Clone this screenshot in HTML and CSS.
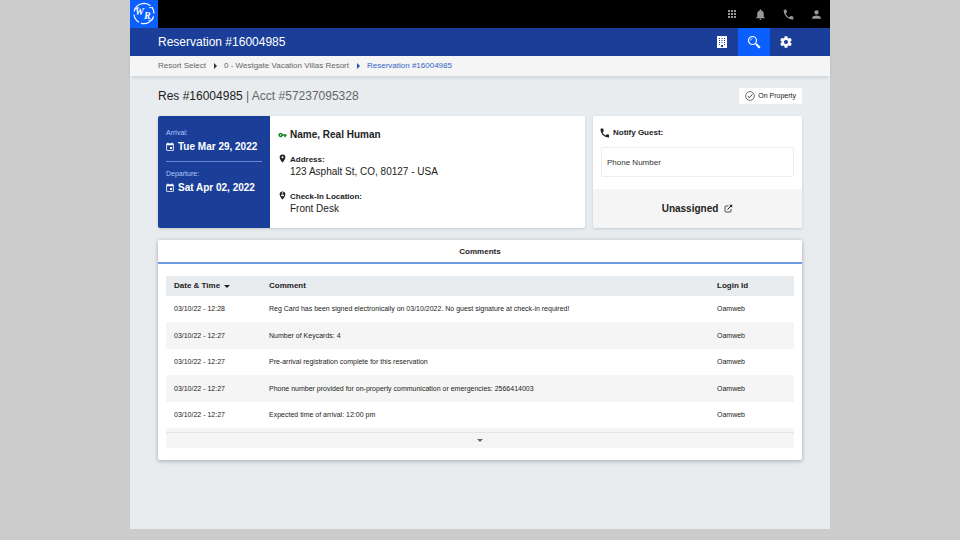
FILE: index.html
```
<!DOCTYPE html>
<html lang="en">
<head>
<meta charset="utf-8">
<meta name="viewport" content="width=device-width, initial-scale=1">
<title>Reservation #16004985</title>
<link rel="stylesheet" href="styles.css">
</head>
<body>
<div class="app">
  <header class="topbar">
    <a class="logo" href="#" aria-label="Home">
      <svg viewBox="0 0 28 28" width="28" height="28" fill="none" stroke="#fff">
        <path d="M20.500 5.800A10 10 0 0 0 4.200 11.500M4 14.500A10 10 0 0 0 9 22.200M11 23.200A10 10 0 0 0 23.600 16.500M24 13.500A10 10 0 0 0 21.800 7.200" stroke-width="1.200"/>
        <path d="M4.500 8.400 9 7.600M19 7.600h4M18.500 20.500l4.500-.8" stroke-width=".8"/>
        <text x="5" y="15">W</text>
        <text x="14" y="19">R</text>
      </svg>
    </a>
    <nav class="tools" aria-label="Account">
      <button type="button" aria-label="Apps"><svg viewBox="0 0 24 24" width="12" height="12"><path d="M4 4h4v4H4zM10 4h4v4h-4zM16 4h4v4h-4zM4 10h4v4H4zM10 10h4v4h-4zM16 10h4v4h-4zM4 16h4v4H4zM10 16h4v4h-4zM16 16h4v4h-4z"/></svg></button>
      <button type="button" aria-label="Notifications"><svg viewBox="0 0 24 24" width="13" height="13"><path d="M12 22c1.100 0 2-.9 2-2h-4c0 1.100.9 2 2 2zm6-6v-5c0-3.070-1.640-5.640-4.500-6.320V4a1.500 1.500 0 0 0-3 0v.68C7.630 5.360 6 7.920 6 11v5l-2 2v1h16v-1z"/></svg></button>
      <button type="button" aria-label="Calls"><svg viewBox="0 0 24 24" width="13" height="13"><path d="M6.620 10.790a15 15 0 0 0 6.590 6.590l2.200-2.200a1 1 0 0 1 1.020-.24c1.120.37 2.330.57 3.570.57.550 0 1 .45 1 1V20a1 1 0 0 1-1 1A17 17 0 0 1 3 4a1 1 0 0 1 1-1h3.500a1 1 0 0 1 1 1c0 1.250.2 2.450.57 3.570a1 1 0 0 1-.25 1.020z"/></svg></button>
      <button type="button" aria-label="Profile"><svg viewBox="0 0 24 24" width="13" height="13"><path d="M12 12a4 4 0 1 0 0-8 4 4 0 0 0 0 8zm0 2c-2.670 0-8 1.340-8 4v2h16v-2c0-2.660-5.330-4-8-4z"/></svg></button>
    </nav>
  </header>
  <div class="titlebar">
    <h1>Reservation #16004985</h1>
    <nav class="sections" aria-label="Sections">
      <button type="button" aria-label="Property"><svg viewBox="0 0 12 14" width="12" height="14"><path fill-rule="evenodd" d="M1 1h10v12H1zM3 3v1h1V3zm2.500 0v1h1V3zM8 3v1h1V3zM3 5v1h1V5zm2.500 0v1h1V5zM8 5v1h1V5zM3 7v1h1V7zm2.500 0v1h1V7zM8 7v1h1V7zM3 9v1h1V9zm5 0v1h1V9zM5 10v2h2v-2z"/></svg></button>
      <button type="button" class="active" aria-label="Search"><svg viewBox="0 0 14 14" width="14" height="14" fill="none" stroke="#fff"><circle cx="5.500" cy="5.500" r="4" stroke-width="1.200"/><path d="M3.500 5.500a2 2 0 0 1 2-2" stroke-width=".7"/><path d="M8.500 8.500l1.200 1.200" stroke-width="1.200"/><path d="M9.800 9.800l2.400 2.400" stroke-width="2.200" stroke-linecap="round"/></svg></button>
      <button type="button" aria-label="Settings"><svg viewBox="0 0 24 24" width="14" height="14"><path d="M19.430 12.980a7.800 7.800 0 0 0 0-1.960l2.110-1.650a.5.5 0 0 0 .12-.64l-2-3.460a.5.5 0 0 0-.61-.22l-2.490 1a7.300 7.300 0 0 0-1.690-.98l-.38-2.650A.49.490 0 0 0 14 2h-4a.49.490 0 0 0-.49.420l-.38 2.650c-.61.25-1.170.59-1.690.98l-2.490-1a.5.5 0 0 0-.61.220l-2 3.460a.5.5 0 0 0 .12.640l2.110 1.650a8 8 0 0 0 0 1.960l-2.110 1.650a.5.5 0 0 0-.12.640l2 3.460c.12.220.39.300.61.220l2.490-1c.52.400 1.080.73 1.690.98l.38 2.650c.03.240.24.420.49.420h4c.25 0 .46-.18.490-.42l.38-2.650c.61-.25 1.170-.59 1.690-.98l2.490 1c.23.090.49 0 .61-.22l2-3.460a.5.5 0 0 0-.12-.64zM12 15.500a3.500 3.500 0 1 1 0-7 3.500 3.500 0 0 1 0 7z"/></svg></button>
    </nav>
  </div>
  <nav class="crumbs" aria-label="Breadcrumb">
    <a href="#">Resort Select</a>
    <svg viewBox="0 0 4 6" width="4" height="6" fill="#333"><path d="M1 0l3 3-3 3z"/></svg>
    <a href="#">0 - Westgate Vacation Villas Resort</a>
    <svg viewBox="0 0 4 6" width="4" height="6" fill="#2450b8"><path d="M1 0l3 3-3 3z"/></svg>
    <a href="#" class="current" aria-current="page">Reservation #16004985</a>
  </nav>
  <main>
    <div class="heading">
      <h2>Res #16004985 <span>| Acct #57237095328</span></h2>
      <div class="status"><svg viewBox="0 0 10 10" width="10" height="10" fill="none" stroke="#333"><circle cx="5" cy="5" r="4.400" stroke-width=".7"/><path d="M2.700 5.200l1.600 1.500L7.400 3.300" stroke-width="1"/></svg>On Property</div>
    </div>
    <div class="summary">
      <section class="card stay">
        <div class="dates">
          <div class="date">
            <span class="date-label">Arrival:</span>
            <span class="date-value"><svg viewBox="0 0 24 24" width="10" height="10"><path d="M17 12h-5v5h5zM16 1v2H8V1H6v2H5a2 2 0 0 0-2 2v14c0 1.100.89 2 2 2h14a2 2 0 0 0 2-2V5a2 2 0 0 0-2-2h-1V1zm3 18H5V8h14z"/></svg>Tue Mar 29, 2022</span>
          </div>
          <div class="date">
            <span class="date-label">Departure:</span>
            <span class="date-value"><svg viewBox="0 0 24 24" width="10" height="10"><path d="M17 12h-5v5h5zM16 1v2H8V1H6v2H5a2 2 0 0 0-2 2v14c0 1.100.89 2 2 2h14a2 2 0 0 0 2-2V5a2 2 0 0 0-2-2h-1V1zm3 18H5V8h14z"/></svg>Sat Apr 02, 2022</span>
          </div>
        </div>
        <div class="guest">
          <div class="entry">
            <svg viewBox="0 0 24 24" width="9" height="12" fill="#14861b"><path d="M12.650 10A6 6 0 0 0 7 6a6 6 0 1 0 5.650 8H17v4h4v-4h2v-4zM7 14a2 2 0 1 1 0-4 2 2 0 0 1 0 4z"/></svg>
            <h3>Name, Real Human</h3>
          </div>
          <div class="entry">
            <svg viewBox="4 1 16 22" width="9" height="9"><path d="M12 2a7 7 0 0 0-7 7c0 5.250 7 13 7 13s7-7.750 7-13a7 7 0 0 0-7-7zm0 9.500a2.500 2.500 0 1 1 0-5 2.500 2.500 0 0 1 0 5z"/></svg>
            <div><h4>Address:</h4><p>123 Asphalt St, CO, 80127 - USA</p></div>
          </div>
          <div class="entry">
            <svg viewBox="4 1 16 22" width="9" height="9"><path fill-rule="evenodd" d="M12 2a7 7 0 0 0-7 7c0 5.250 7 13 7 13s7-7.750 7-13a7 7 0 0 0-7-7zm0 2a2 2 0 1 1 0 4 2 2 0 0 1 0-4zm0 10a5 5 0 0 1-4-2c0-1.500 2.700-2.300 4-2.300s4 .8 4 2.300a5 5 0 0 1-4 2z"/></svg>
            <div><h4>Check-In Location:</h4><p>Front Desk</p></div>
          </div>
        </div>
      </section>
      <section class="card notify">
        <div class="notify-form">
          <label for="phone"><svg viewBox="1 1 22 22" width="10" height="10"><path d="M6.620 10.790a15 15 0 0 0 6.590 6.590l2.200-2.200a1 1 0 0 1 1.020-.24c1.120.37 2.330.57 3.570.57.550 0 1 .45 1 1V20a2 2 0 0 1-2 2A18 18 0 0 1 2 4a2 2 0 0 1 2-2h3.500a1 1 0 0 1 1 1c0 1.250.2 3.450.57 4.570a1 1 0 0 1-.25 1.020z"/></svg>Notify Guest:</label>
          <input id="phone" type="tel" placeholder="Phone Number">
        </div>
        <button type="button" class="assign">Unassigned<svg viewBox="0 0 9 9" width="9" height="9" fill="none" stroke="#222"><path d="M4.500 2H1.800a.8.8 0 0 0-.8.8v4.400a.8.8 0 0 0 .8.800h4.400a.8.8 0 0 0 .8-.8V5" stroke-width=".8"/><path d="M3.500 5.500L7.500 1.500" stroke-width="1"/><path d="M5.200.8h3v3z" fill="#222" stroke="none"/></svg></button>
      </section>
    </div>
    <section class="card comments">
      <h3 class="tab">Comments</h3>
      <div class="comments-body">
        <div class="scroller">
          <table>
            <thead>
              <tr><th class="col-date"><button type="button" class="sort">Date &amp; Time<svg viewBox="0 0 6 3" width="6" height="3"><path d="M0 0h6L3 3z"/></svg></button></th><th>Comment</th><th class="col-login">Login Id</th></tr>
            </thead>
            <tbody>
              <tr><td>03/10/22 - 12:28</td><td>Reg Card has been signed electronically on 03/10/2022. No guest signature at check-in required!</td><td>Oamweb</td></tr>
              <tr><td>03/10/22 - 12:27</td><td>Number of Keycards: 4</td><td>Oamweb</td></tr>
              <tr><td>03/10/22 - 12:27</td><td>Pre-arrival registration complete for this reservation</td><td>Oamweb</td></tr>
              <tr><td>03/10/22 - 12:27</td><td>Phone number provided for on-property communication or emergencies: 2566414003</td><td>Oamweb</td></tr>
              <tr><td>03/10/22 - 12:27</td><td>Expected time of arrival: 12:00 pm</td><td>Oamweb</td></tr>
            </tbody>
          </table>
        </div>
        <button type="button" class="more" aria-label="Show more comments"><svg viewBox="0 0 6 3" width="6" height="3"><path d="M0 0h6L3 3z"/></svg></button>
      </div>
    </section>
  </main>
</div>
</body>
</html>
```
FILE: styles.css
```
* {
  box-sizing: border-box;
}

body {
  margin: 0;
  background: #ccc;
  color: #222;
  fill: #222;
  font-family: "Liberation Sans", Arial, sans-serif;
  font-size: 8px;
  line-height: 12px;
}

h1, h2, h3, h4, p {
  margin: 0;
}

button {
  display: flex;
  align-items: center;
  justify-content: center;
  border: 0;
  padding: 0;
  background: none;
  color: inherit;
  font: inherit;
  cursor: pointer;
}

a {
  color: inherit;
  text-decoration: none;
}

svg {
  display: block;
  flex: none;
}

.app {
  display: flex;
  flex-direction: column;
  max-width: 700px;
  min-height: calc(100vh - 11px);
  margin: 0 auto 11px;
  background: #e8ecef;
}

.topbar {
  display: flex;
  justify-content: space-between;
  background: #000;
}

.logo {
  background: #0b5fff;
}

.logo text {
  fill: #fff;
  stroke: none;
  font-family: "Liberation Serif", serif;
  font-size: 10px;
  font-style: italic;
  font-weight: bold;
  line-height: 10px;
}

.tools {
  display: flex;
}

.tools button {
  width: 28px;
  height: 28px;
  fill: #999;
}

.titlebar {
  display: flex;
  align-items: center;
  justify-content: space-between;
  padding: 0 28px;
  background: #1b3f99;
  color: #fff;
}

h1 {
  font-size: 12px;
  font-weight: normal;
}

.sections {
  display: flex;
}

.sections button {
  width: 32px;
  height: 28px;
  fill: #fff;
}

.sections .active {
  background: #0b5fff;
}

.crumbs {
  display: flex;
  align-items: center;
  gap: 7px;
  padding: 4px 28px;
  background: #f5f5f5;
  box-shadow: 0 2px 4px -1px rgba(0, 0, 0, .15);
  color: #666;
}

.crumbs .current {
  color: #3564c8;
}

main {
  padding: 12px 28px;
}

.heading {
  display: flex;
  align-items: center;
  justify-content: space-between;
  margin-bottom: 12px;
}

h2 {
  font-size: 12px;
  font-weight: normal;
}

h2 span {
  color: #666;
}

.status {
  display: flex;
  align-items: center;
  gap: 3px;
  padding: 2px 6px;
  border-radius: 2px;
  background: #fff;
  font-size: 7px;
}

.card {
  overflow: hidden;
  border-radius: 2px;
  background: #fff;
  box-shadow: 0 1px 3px rgba(0, 0, 0, .15);
}

.summary {
  display: grid;
  grid-template-columns: 427fr 209fr;
  gap: 8px;
  margin-bottom: 12px;
}

.stay {
  display: flex;
}

.dates {
  width: 112px;
  padding: 11px 8px;
  background: #1b3f99;
  color: #fff;
}

.date + .date {
  margin-top: 8px;
  padding-top: 6px;
  border-top: 1px solid #6688d0;
}

.date-label {
  display: block;
  color: #b0c8ff;
  font-size: 7px;
}

.date-value {
  display: flex;
  align-items: center;
  gap: 3px;
  padding-top: 2px;
  font-size: 10px;
  font-weight: bold;
  fill: #fff;
  white-space: nowrap;
}

.date-value svg {
  margin-left: -1px;
}

.guest {
  display: flex;
  flex: 1;
  flex-direction: column;
  gap: 13px;
  padding: 13px 8px 12px;
}

.entry {
  display: flex;
  gap: 3px;
}

h3 {
  font-size: 10px;
}

h4 {
  font-size: 8px;
}

.entry p {
  font-size: 10px;
}

.notify {
  display: flex;
  flex-direction: column;
}

.notify-form {
  flex: 1;
  padding: 11px 8px 12px;
}

.notify label {
  display: flex;
  align-items: center;
  gap: 3px;
  margin-left: -1px;
  font-weight: bold;
}

.notify input {
  display: block;
  width: 100%;
  height: 30px;
  margin-top: 8px;
  padding: 0 5px;
  border: 1px solid #eee;
  border-radius: 2px;
  background: #fff;
  color: #333;
  font: inherit;
}

.notify input::placeholder {
  color: #333;
  opacity: 1;
}

.assign {
  gap: 6px;
  height: 39px;
  background: #f5f5f5;
  font-size: 10px;
  font-weight: bold;
}

.comments {
  box-shadow: 0 1px 4px rgba(0, 0, 0, .3);
}

.tab {
  padding: 6px 0 4px;
  border-bottom: 2px solid #7099e6;
  font-size: 8px;
  text-align: center;
}

.comments-body {
  padding: 12px 8px;
}

.scroller {
  padding-bottom: 4px;
  background: #f5f5f5;
}

table {
  width: 100%;
  border-collapse: collapse;
  table-layout: fixed;
  background: #fff;
}

th, td {
  padding: 0 8px;
  text-align: left;
}

th {
  height: 20px;
  background: #e8ecef;
}

.col-date {
  width: 95px;
}

.col-login {
  width: 85px;
}

.sort {
  gap: 4px;
}

td {
  height: 26px;
  font-size: 7px;
}

tbody tr:nth-child(even) td {
  height: 27px;
  background: #f5f5f5;
}

.more {
  width: 100%;
  height: 16px;
  border-top: 1px solid #e4e4e4;
  background: #f5f5f5;
  fill: #666;
}
```
